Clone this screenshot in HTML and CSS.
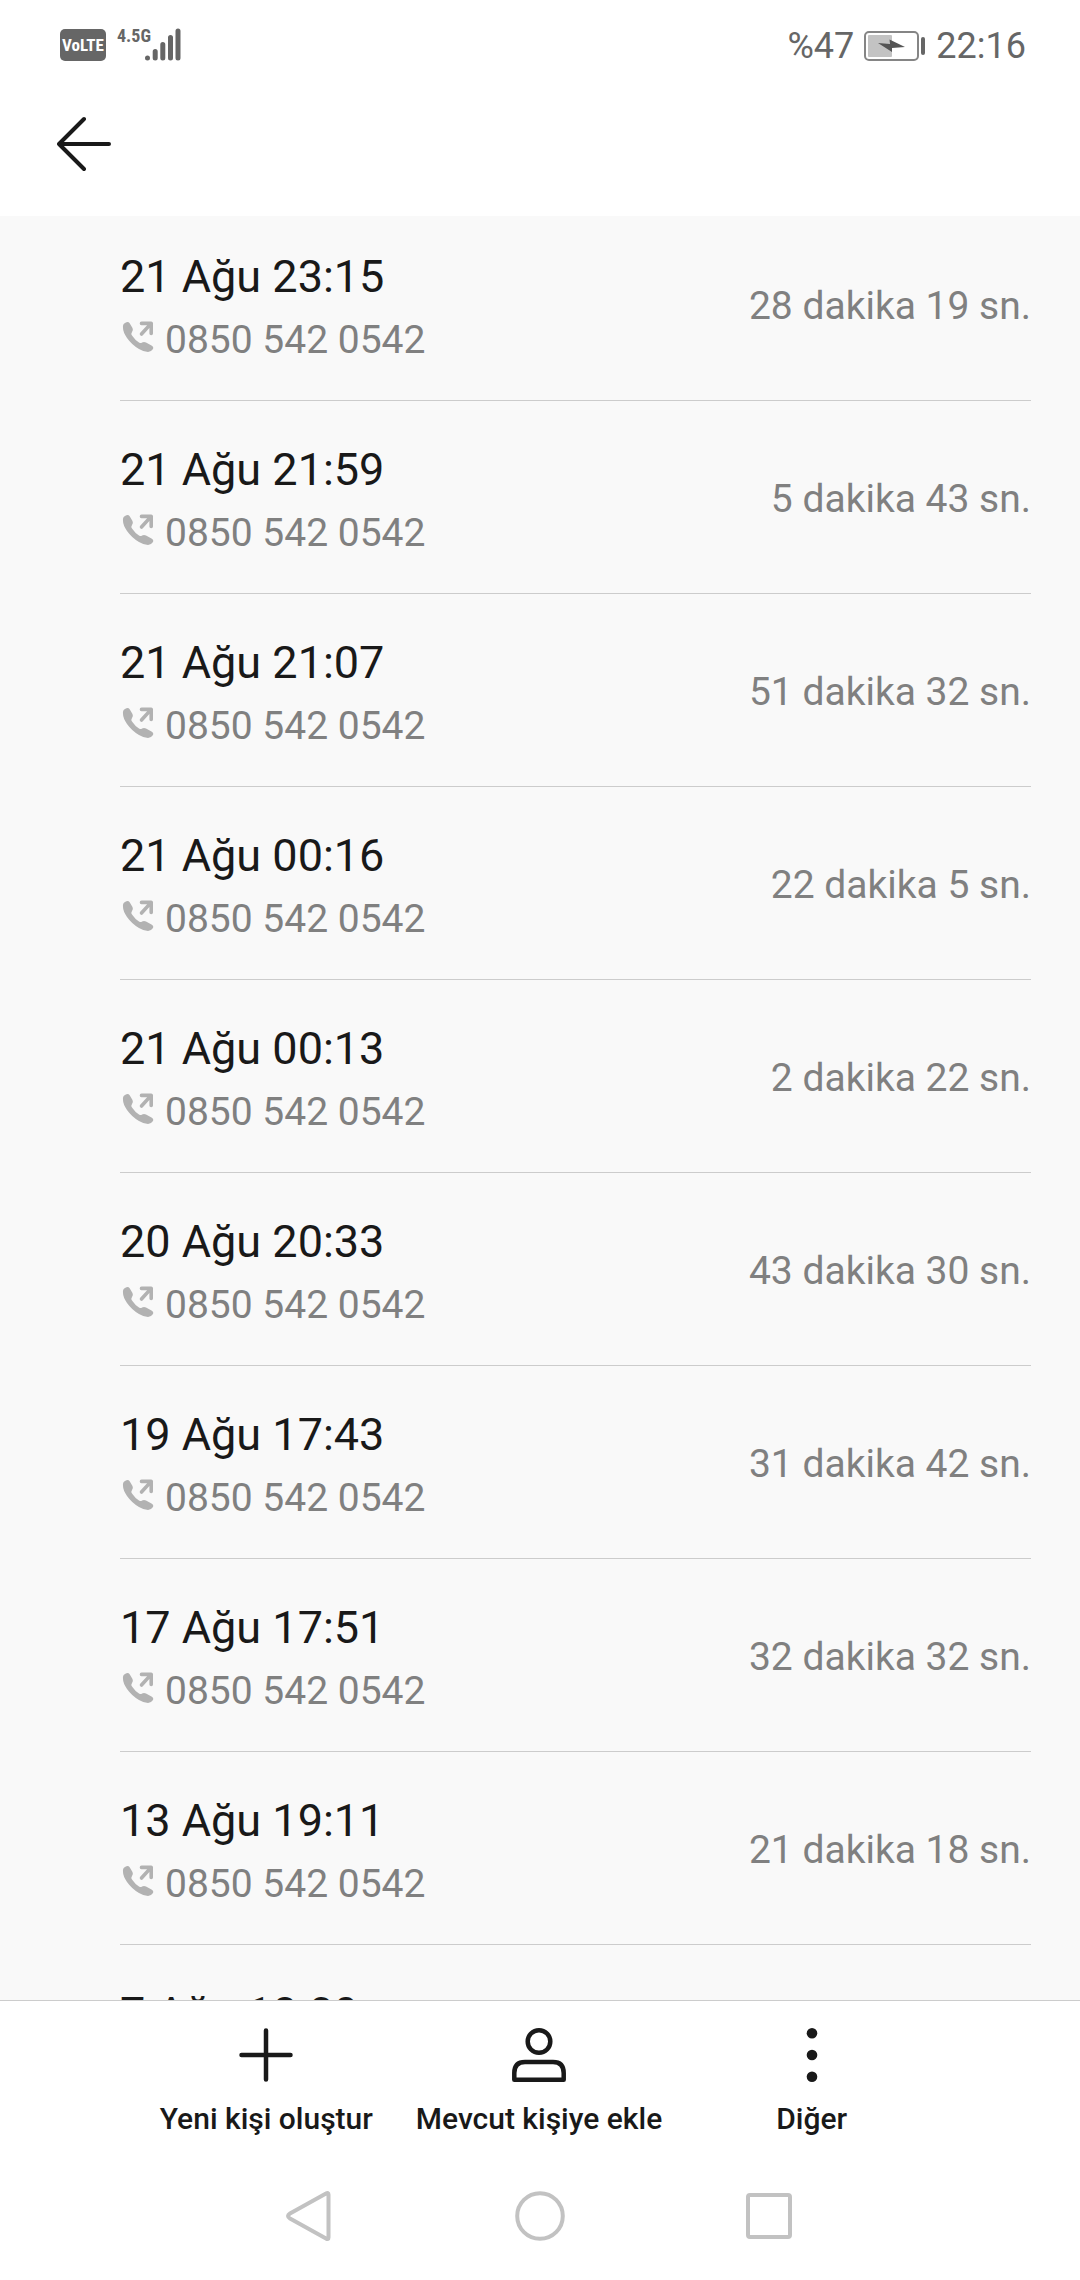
FILE: index.html
```html
<!DOCTYPE html>
<html lang="tr">
<head>
<meta charset="utf-8">
<meta name="viewport" content="width=device-width, initial-scale=1">
<title>Arama geçmişi</title>
<link rel="stylesheet" href="styles.css">
</head>
<body>
<svg class="sprite" aria-hidden="true">
  <symbol id="outgoing" viewBox="0 0 34 34">
    <path fill="#b2b2b2" d="M3 8Q2.500 4 5 3Q8 1 9.500 3L12.500 8Q13.500 10 12 12Q10.500 14 12 15.500Q15 20 19 22.500Q21 23.500 22 22.500Q24 21.500 26 22.500L31.500 25.500Q34 27 33 29Q31 32 28 32Q24 32 19 29Q12 25 7 18Q3 12 3 8Z"/>
    <path fill="none" stroke="#b2b2b2" stroke-width="3.600" stroke-linecap="round" stroke-linejoin="round" d="M21.500 3.400H31.200V13.500M31.200 3.400L21.500 14"/>
  </symbol>
</svg>
<div class="screen">
  <div class="status">
    <div class="group">
      <span class="volte">VoLTE</span>
      <span class="network">4.5G</span>
      <svg class="signal" width="36" height="34" viewBox="0 0 36 34" stroke="#666" stroke-width="5" stroke-linecap="round"><path d="M2.500 31V31.100M10.200 24.500V31M17.800 17.500V31M25.500 10.500V31M33 4V31"/></svg>
    </div>
    <div class="group right">
      <span>%47</span>
      <svg class="battery" width="62" height="30" viewBox="0 0 62 30"><rect x="1" y="1" width="53" height="28" rx="4" fill="none" stroke="#858585" stroke-width="2"/><rect x="4" y="4" width="24" height="22" rx="1" fill="#c3c3c3"/><path d="M14 12L26 13L25.500 8.500L41 16L28 17V21Z" fill="#555"/><rect x="57" y="6" width="4" height="18" rx="2" fill="#666"/></svg>
      <span>22:16</span>
    </div>
  </div>
  <header class="header">
    <button class="back" aria-label="Geri"><svg width="56" height="56" viewBox="0 0 56 56" fill="none" stroke="#191919" stroke-width="4" stroke-linecap="round" stroke-linejoin="round"><path d="M27 3L2 28L27 53M2 28H52"/></svg></button>
  </header>
  <main class="calls">
    <ul class="list">
      <li class="call"><div><div class="date">21 Ağu 23:15</div><div class="number"><svg class="out"><use href="#outgoing"/></svg>0850 542 0542</div></div><span class="duration">28 dakika 19 sn.</span></li>
      <li class="call"><div><div class="date">21 Ağu 21:59</div><div class="number"><svg class="out"><use href="#outgoing"/></svg>0850 542 0542</div></div><span class="duration">5 dakika 43 sn.</span></li>
      <li class="call"><div><div class="date">21 Ağu 21:07</div><div class="number"><svg class="out"><use href="#outgoing"/></svg>0850 542 0542</div></div><span class="duration">51 dakika 32 sn.</span></li>
      <li class="call"><div><div class="date">21 Ağu 00:16</div><div class="number"><svg class="out"><use href="#outgoing"/></svg>0850 542 0542</div></div><span class="duration">22 dakika 5 sn.</span></li>
      <li class="call"><div><div class="date">21 Ağu 00:13</div><div class="number"><svg class="out"><use href="#outgoing"/></svg>0850 542 0542</div></div><span class="duration">2 dakika 22 sn.</span></li>
      <li class="call"><div><div class="date">20 Ağu 20:33</div><div class="number"><svg class="out"><use href="#outgoing"/></svg>0850 542 0542</div></div><span class="duration">43 dakika 30 sn.</span></li>
      <li class="call"><div><div class="date">19 Ağu 17:43</div><div class="number"><svg class="out"><use href="#outgoing"/></svg>0850 542 0542</div></div><span class="duration">31 dakika 42 sn.</span></li>
      <li class="call"><div><div class="date">17 Ağu 17:51</div><div class="number"><svg class="out"><use href="#outgoing"/></svg>0850 542 0542</div></div><span class="duration">32 dakika 32 sn.</span></li>
      <li class="call"><div><div class="date">13 Ağu 19:11</div><div class="number"><svg class="out"><use href="#outgoing"/></svg>0850 542 0542</div></div><span class="duration">21 dakika 18 sn.</span></li>
      <li class="call"><div class="date">7 Ağu 18:09</div></li>
    </ul>
  </main>
  <div class="toolbar">
    <button class="action"><svg width="56" height="56" viewBox="0 0 56 56" stroke="#191919" stroke-width="4.500" stroke-linecap="round"><path d="M28 3.500V52.500M3.500 28H52.500"/></svg>Yeni kişi oluştur</button>
    <button class="action"><svg width="56" height="56" viewBox="0 0 56 56" fill="none" stroke="#191919" stroke-width="4.500" stroke-linejoin="round"><circle cx="28" cy="14.500" r="11.300"/><path d="M3.300 52.700V46Q3.300 35 14 35H42Q52.700 35 52.700 46V52.700Z"/></svg>Mevcut kişiye ekle</button>
    <button class="action"><svg width="56" height="56" viewBox="0 0 56 56" fill="#191919"><circle cx="28" cy="6.300" r="5.300"/><circle cx="28" cy="28" r="5.300"/><circle cx="28" cy="49.700" r="5.300"/></svg>Diğer</button>
  </div>
  <nav class="system">
    <button aria-label="Geri"><svg width="52" height="52" viewBox="0 0 52 52"><path d="M43.500 4.500V47.500Q43.500 50 41 48.500L5 28.500Q1 26 5 23.500L41 3.500Q43.500 2 43.500 4.500Z"/></svg></button>
    <button aria-label="Ana ekran"><svg width="52" height="52" viewBox="0 0 52 52"><circle cx="26" cy="26" r="22.800"/></svg></button>
    <button aria-label="Son uygulamalar"><svg width="52" height="52" viewBox="0 0 52 52"><rect x="5" y="5" width="42" height="42" rx="2"/></svg></button>
  </nav>
</div>
</body>
</html>
```
FILE: styles.css
```css
* { box-sizing: border-box; }
body { margin: 0; background: #fff; color: #191919; font-family: Roboto, "Noto Sans", sans-serif; }
button { display: flex; padding: 0; border: 0; background: none; color: inherit; font: inherit; }
svg { display: block; flex: none; }
.sprite { position: absolute; width: 0; height: 0; }
.screen { display: flex; flex-direction: column; height: 100vh; }

.status { display: flex; flex: none; justify-content: space-between; height: 89px; padding: 22px 54px 0 60px; color: #666; }
.group { display: flex; align-items: flex-start; }
.right { align-items: center; height: 48px; gap: 10px; font-size: 36px; line-height: 48px; }
.volte { width: 46px; height: 32px; margin-top: 7px; border-radius: 5px; background: #666; color: #fff; font: bold 17px/32px "Roboto Condensed", "Liberation Sans Narrow", "Liberation Sans", sans-serif; text-align: center; }
.network { width: 28px; margin: 4px 0 0 11px; font: bold 18px/20px "Roboto Condensed", "Liberation Sans Narrow", "Liberation Sans", sans-serif; white-space: nowrap; }
.signal { margin-top: 5px; }

.header { display: flex; flex: none; align-items: flex-start; height: 127px; padding: 27px 57px; }

.calls { display: flex; flex: 1; flex-direction: column; min-height: 0; overflow: hidden; background: #f9f9f9; }
.list { flex: none; margin: -8px 0 0; padding: 0 49px 0 120px; list-style: none; }
.call { display: flex; justify-content: space-between; align-items: flex-start; height: 193px; padding-top: 39px; border-bottom: 1px solid #ccc; }
.date { font-size: 45px; line-height: 60px; }
.number { display: flex; align-items: flex-start; margin-top: 5px; color: #808080; font-size: 39px; line-height: 56px; }
.out { width: 34px; height: 34px; margin: 8px 11px 0 0; }
.duration { align-self: center; margin-top: -36px; color: #808080; font-size: 39px; line-height: 56px; }

.toolbar { display: grid; flex: none; grid-template-columns: repeat(3, 1fr); padding: 26px 132px 0 130px; border-top: 1px solid #ccc; }
.action { flex-direction: column; align-items: center; gap: 16px; font-size: 30px; font-weight: 500; line-height: 40px; white-space: nowrap; }
.system { display: grid; flex: none; grid-template-columns: repeat(3, 1fr); align-items: center; justify-items: center; height: 141px; padding: 12px 196px 0; }
.system svg { fill: none; stroke: #c2c2c2; stroke-width: 4; }
```
